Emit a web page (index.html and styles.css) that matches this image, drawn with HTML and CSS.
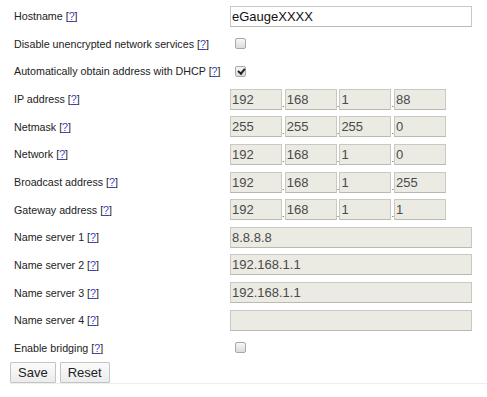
FILE: index.html
```html
<!DOCTYPE html>
<html>
<head>
<meta charset="utf-8">
<link rel="stylesheet" href="styles.css">
</head>
<body>
<form class="net">
  <div class="lbl">Hostname [<a href="#">?</a>]</div>
  <div class="fld"><input class="txt wide" type="text" value="eGaugeXXXX"></div>

  <div class="lbl">Disable unencrypted network services [<a href="#">?</a>]</div>
  <div class="fld"><input class="cb" type="checkbox"></div>

  <div class="lbl">Automatically obtain address with DHCP [<a href="#">?</a>]</div>
  <div class="fld"><input class="cb" type="checkbox" checked></div>

  <div class="lbl">IP address [<a href="#">?</a>]</div>
  <div class="fld ip"><input class="txt dis oct" value="192" readonly><span class="dot">.</span><input class="txt dis oct" value="168" readonly><span class="dot">.</span><input class="txt dis oct" value="1" readonly><span class="dot">.</span><input class="txt dis oct" value="88" readonly></div>

  <div class="lbl">Netmask [<a href="#">?</a>]</div>
  <div class="fld ip"><input class="txt dis oct" value="255" readonly><span class="dot">.</span><input class="txt dis oct" value="255" readonly><span class="dot">.</span><input class="txt dis oct" value="255" readonly><span class="dot">.</span><input class="txt dis oct" value="0" readonly></div>

  <div class="lbl">Network [<a href="#">?</a>]</div>
  <div class="fld ip"><input class="txt dis oct" value="192" readonly><span class="dot">.</span><input class="txt dis oct" value="168" readonly><span class="dot">.</span><input class="txt dis oct" value="1" readonly><span class="dot">.</span><input class="txt dis oct" value="0" readonly></div>

  <div class="lbl">Broadcast address [<a href="#">?</a>]</div>
  <div class="fld ip"><input class="txt dis oct" value="192" readonly><span class="dot">.</span><input class="txt dis oct" value="168" readonly><span class="dot">.</span><input class="txt dis oct" value="1" readonly><span class="dot">.</span><input class="txt dis oct" value="255" readonly></div>

  <div class="lbl">Gateway address [<a href="#">?</a>]</div>
  <div class="fld ip"><input class="txt dis oct" value="192" readonly><span class="dot">.</span><input class="txt dis oct" value="168" readonly><span class="dot">.</span><input class="txt dis oct" value="1" readonly><span class="dot">.</span><input class="txt dis oct" value="1" readonly></div>

  <div class="lbl">Name server 1 [<a href="#">?</a>]</div>
  <div class="fld"><input class="txt dis wide" value="8.8.8.8" readonly></div>

  <div class="lbl">Name server 2 [<a href="#">?</a>]</div>
  <div class="fld"><input class="txt dis wide" value="192.168.1.1" readonly></div>

  <div class="lbl">Name server 3 [<a href="#">?</a>]</div>
  <div class="fld"><input class="txt dis wide" value="192.168.1.1" readonly></div>

  <div class="lbl">Name server 4 [<a href="#">?</a>]</div>
  <div class="fld"><input class="txt dis wide" value="" readonly></div>

  <div class="lbl">Enable bridging [<a href="#">?</a>]</div>
  <div class="fld"><input class="cb" type="checkbox"></div>
</form>
<div class="actions">
  <button class="btn" type="button">Save</button>
  <button class="btn" type="button">Reset</button>
</div>
<div class="sep"></div>
</body>
</html>
```

FILE: styles.css
```css
html, body {
  margin: 0;
  padding: 0;
  background: #ffffff;
}

body {
  font-family: "Liberation Sans", Arial, sans-serif;
  color: #222222;
}

.net {
  display: grid;
  grid-template-columns: 230px 242px;
  grid-auto-rows: 27.65px;
  padding-top: 2.4px;
}

.lbl {
  display: flex;
  align-items: center;
  padding-left: 14px;
  font-size: 10.7px;
  color: #222222;
  white-space: nowrap;
}

.lbl a {
  color: #3a3ad0;
  text-decoration: underline;
}

.fld {
  display: flex;
  align-items: center;
}

.txt {
  box-sizing: border-box;
  height: 21px;
  margin: 0;
  padding: 0 1px;
  border: 1px solid #c9c9c3;
  border-bottom-color: #b9b9b3;
  background: #ffffff;
  font-family: "Liberation Sans", Arial, sans-serif;
  font-size: 13px;
  color: #111111;
  outline: none;
}

.wide {
  width: 242px;
}

.dis {
  background: #ebebe4;
  color: #4a4a4a;
}

.oct {
  width: 52px;
}

.dot {
  width: 2.7px;
  height: 21px;
  display: flex;
  align-items: flex-end;
  justify-content: center;
  font-size: 9px;
  line-height: 9px;
  color: #444444;
  padding-bottom: 1px;
  box-sizing: border-box;
}

.cb {
  -webkit-appearance: none;
  appearance: none;
  box-sizing: border-box;
  width: 11px;
  height: 11px;
  margin: 0 0 0 4.5px;
  border: 1px solid #a9a9a9;
  border-radius: 2px;
  background: linear-gradient(#f6f6f6, #dcdcdc);
  position: relative;
}

.cb:checked::after {
  content: "";
  position: absolute;
  left: 3px;
  top: 0.5px;
  width: 2.5px;
  height: 5px;
  border: solid #222222;
  border-width: 0 2px 2px 0;
  transform: rotate(40deg);
}

.actions {
  display: flex;
  gap: 4px;
  margin-left: 10px;
}

.btn {
  box-sizing: border-box;
  height: 21px;
  margin: 0;
  padding: 0 7px;
  border: 1px solid #c4c4c4;
  border-radius: 1px;
  background: linear-gradient(#fbfbfb, #ececec);
  font-family: "Liberation Sans", Arial, sans-serif;
  font-size: 13px;
  color: #222222;
}

.sep {
  margin-left: 10px;
  border-top: 1px solid #eeeeee;
}
```
